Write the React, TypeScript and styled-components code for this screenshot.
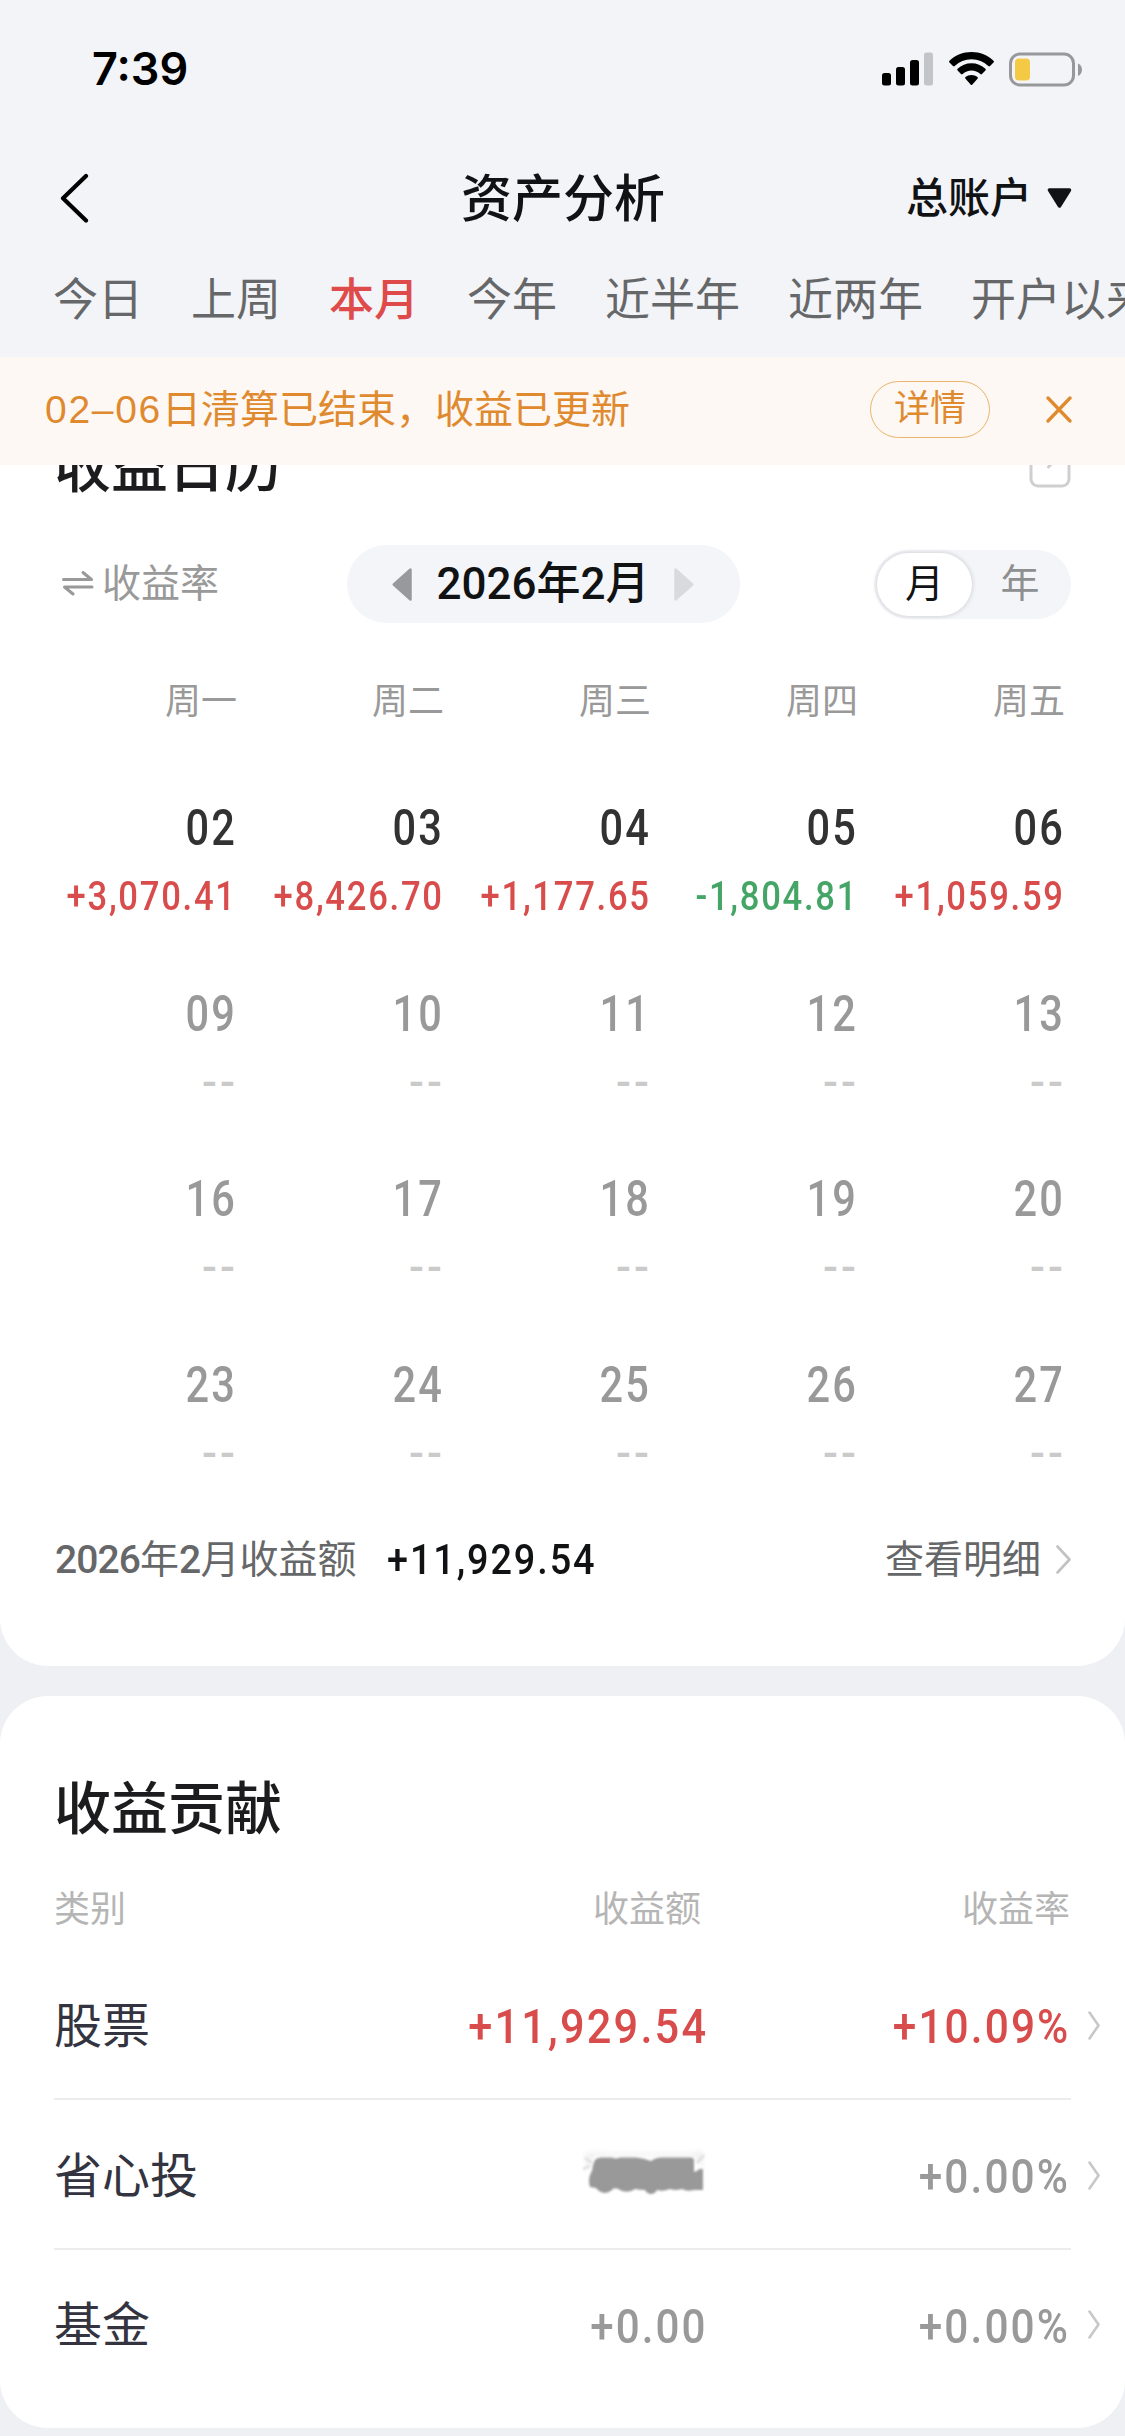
import React from "react";
import styled, { createGlobalStyle } from "styled-components";

const GlobalStyle = createGlobalStyle`
  *, *::before, *::after { box-sizing: border-box; }
  body {
    margin: 0;
    background: #eff0f4;
    font-family: "Liberation Sans", "Noto Sans CJK SC", sans-serif;
    line-height: 1;
    color: #111214;
  }
  svg { flex: none; display: block; }
`;

const Screen = styled.main`
  width: 1125px;
  height: 2436px;
  overflow: hidden;
`;

/* ---------- header ---------- */

const Header = styled.header`
  height: 357px;
  background: #f3f4f8;
`;

const StatusBar = styled.div`
  display: flex;
  align-items: center;
  justify-content: space-between;
  height: 138px;
  padding: 0 43px 0 92px;
`;

const Clock = styled.span`
  font: 600 45px/60px Inter, sans-serif;
  color: #000;
`;

const StatusIcons = styled.div`
  display: flex;
  align-items: center;
  gap: 15.5px;
`;

const NavBar = styled.div`
  display: grid;
  grid-template-columns: 400px 1fr 400px;
  align-items: center;
  height: 119px;
  padding: 0 53px 0 60px;
`;

const NavTitle = styled.h1`
  margin: 0 0 0 1px;
  padding-top: 4px;
  font-size: 51px;
  font-weight: 500;
  white-space: nowrap;
`;

const AccountPicker = styled.div`
  display: flex;
  align-items: center;
  justify-content: flex-end;
  gap: 15px;
  font-size: 42px;
  font-weight: 500;
`;

const AccountName = styled.span`
  padding-top: 3px;
`;

const Tabs = styled.nav`
  display: flex;
  align-items: center;
  gap: 48px;
  height: 87px;
  padding: 0 0 0 53px;
  overflow: hidden;
`;

const Tab = styled.span<{ $active?: boolean }>`
  flex: none;
  font-size: 45px;
  line-height: 60px;
  font-weight: ${(p) => (p.$active ? 500 : 400)};
  color: ${(p) => (p.$active ? "#df4a4a" : "#666769")};
`;

/* ---------- notice ---------- */

const Notice = styled.div`
  position: relative;
  z-index: 1;
  display: flex;
  align-items: center;
  height: 108px;
  padding: 0 53px 3px 45px;
  background: #fef8f5;
  color: #e08a30;
`;

const NoticeText = styled.span`
  flex: 1;
  font-size: 39px;
  line-height: 56px;
`;

const NoticeDate = styled.span`
  letter-spacing: 1.7px;
`;

const NoticeButton = styled.span`
  width: 120px;
  height: 57px;
  margin-right: 56px;
  border: 1.5px solid #e9b56c;
  border-radius: 29px;
  font-size: 36px;
  line-height: 54px;
  text-align: center;
`;

/* ---------- cards ---------- */

const Card = styled.section<{ $first?: boolean }>`
  background: #fff;
  border-radius: ${(p) => (p.$first ? "0 0 48px 48px" : "48px")};
  padding: ${(p) => (p.$first ? "0 54px 33px" : "73px 54px 29px")};
  margin-bottom: 30px;
`;

const CardHead = styled.div<{ $tucked?: boolean }>`
  display: flex;
  align-items: center;
  justify-content: space-between;
  height: 80px;
  margin-top: ${(p) => (p.$tucked ? "-38px" : "0")};
  margin-bottom: ${(p) => (p.$tucked ? "1px" : "0")};
  padding-top: ${(p) => (p.$tucked ? "0" : "2px")};
`;

const CardTitle = styled.h2`
  margin: 0;
  font-size: 57px;
  font-weight: 500;
  color: #1c1c1e;
`;

const Controls = styled.div`
  display: grid;
  grid-template-columns: 293px 393px 1fr;
  align-items: center;
  height: 152px;
`;

const MetricSwitch = styled.div`
  display: flex;
  align-items: center;
  gap: 8px;
  padding: 0 0 2px 8px;
  font-size: 39px;
  color: #999;
`;

const MonthPicker = styled.div`
  display: flex;
  align-items: center;
  justify-content: space-between;
  height: 78px;
  padding: 0 46px 0 45px;
  border-radius: 39px;
  background: #f4f5f8;
`;

const MonthLabel = styled.span`
  font-family: Roboto, "Noto Sans CJK SC", sans-serif;
  font-size: 44px;
  font-weight: 500;
  line-height: 60px;
  white-space: nowrap;
`;

const Toggle = styled.div`
  display: flex;
  justify-self: end;
  gap: 2px;
  width: 197px;
  height: 69px;
  padding: 3px 5px 3px 3px;
  border-radius: 35px;
  background: #f4f5f8;
`;

const ToggleItem = styled.span<{ $on?: boolean }>`
  flex: ${(p) => (p.$on ? "0 0 95px" : "1")};
  border-radius: 33px;
  font-size: 39px;
  line-height: 61px;
  text-align: center;
  color: ${(p) => (p.$on ? "#111214" : "#8e8f91")};
  background: ${(p) => (p.$on ? "#fff" : "transparent")};
  box-shadow: ${(p) => (p.$on ? "0 0 4px 1px rgba(0, 0, 0, 0.13)" : "none")};
`;

/* ---------- figures ---------- */

const Figure = styled.span<{ $size: number; $tone?: string; $origin?: string; $squeeze?: number }>`
  display: inline-block;
  font-family: Roboto, sans-serif;
  font-size: ${(p) => p.$size}px;
  font-weight: 500;
  line-height: 60px;
  padding-top: 1px;
  letter-spacing: 0.05em;
  margin-right: -0.04em;
  white-space: nowrap;
  color: ${(p) => p.$tone ?? "inherit"};
  transform: scaleX(${(p) => p.$squeeze ?? 0.87});
  transform-origin: ${(p) => p.$origin ?? "right"} center;
`;

const RED = "#d84c4c";
const GREEN = "#45a566";
const GREY = "#999999";

/* ---------- calendar ---------- */

const Week = styled.div`
  display: grid;
  grid-template-columns: 182px repeat(4, 207px);
`;

const Weekday = styled.span`
  height: 60px;
  margin: 12px -1px 10px 0;
  font-size: 36px;
  line-height: 60px;
  text-align: right;
  color: #999;
`;

const Day = styled.div`
  display: flex;
  flex-direction: column;
  align-items: flex-end;
  gap: 8px;
  height: 185.7px;
  padding: 55px 1px 0 0;
`;

const NoData = styled.span`
  font: 500 44px/60px Roboto, sans-serif;
  letter-spacing: 3px;
  margin-right: -3px;
  color: #cacaca;
`;

const Summary = styled.div`
  display: flex;
  align-items: center;
  height: 148px;
  font-size: 39px;
  color: #666769;
`;

const SummaryLabel = styled.span`
  font-family: Roboto, "Noto Sans CJK SC", sans-serif;
  line-height: 60px;
  padding: 2px 0 0 1px;
  margin-right: 31px;
`;

const LabelNumber = styled.span`
  font-weight: 500;
  letter-spacing: -0.9px;
`;

const DetailLink = styled.span`
  display: flex;
  align-items: center;
  gap: 15px;
  margin-left: auto;
  padding-top: 2px;
`;

/* ---------- contribution table ---------- */

const TableHead = styled.div`
  display: grid;
  grid-template-columns: 280px 367px 369px;
  height: 60px;
  margin: 31px 0 10px;
  font-size: 36px;
  line-height: 60px;
  color: #b5b5b5;
  & > :not(:first-child) { text-align: right; }
`;

const Row = styled.div`
  display: grid;
  grid-template-columns: 280px 372px 362px 1fr;
  align-items: center;
  height: 150px;
  padding-top: 4px;
  margin-right: -29px;
  background: linear-gradient(#ededef, #ededef) left bottom / 1017px 2px no-repeat;
  &:last-child { height: 149px; background: none; }
`;

const Name = styled.span`
  font-size: 48px;
  line-height: 60px;
  color: #33343f;
`;

const Cell = styled.span`
  display: flex;
  justify-content: flex-end;
`;

const ChevronCell = styled.span`
  display: flex;
  justify-content: flex-end;
  padding-bottom: 3px;
`;

/* ---------- drawings ---------- */

const Signal = () => (
  <svg width="51" height="34" viewBox="0 0 51 34">
    <rect x="0" y="21" width="9" height="12.5" rx="2.5" />
    <rect x="14" y="15" width="9" height="18.5" rx="2.5" />
    <rect x="28" y="8" width="9" height="25.5" rx="2.5" />
    <rect x="42" y="0.5" width="9" height="33" rx="2.5" fill="#c3c4c8" />
  </svg>
);

const Wifi = () => (
  <svg width="45" height="34" viewBox="0 0 45 34">
    <path d="M22.5 0C31 0 38.800 3.200 44.500 8.800a1.200 1.200 0 0 1 0 1.700L41 14a1.200 1.200 0 0 1-1.700 0A24 24 0 0 0 22.500 7.200 24 24 0 0 0 5.700 14 1.200 1.200 0 0 1 4 14L.500 10.500a1.200 1.200 0 0 1 0-1.700C6.200 3.200 14 0 22.500 0Z" />
    <path d="M22.500 11.300c5.300 0 10.200 2 13.900 5.500a1.200 1.200 0 0 1 0 1.700L33 22a1.200 1.200 0 0 1-1.700 0 12.800 12.800 0 0 0-17.600 0 1.200 1.200 0 0 1-1.700 0l-3.400-3.500a1.200 1.200 0 0 1 0-1.700c3.700-3.500 8.600-5.500 13.900-5.500Z" />
    <path d="M22.500 22.900c2.300 0 4.400.8 6 2.200a1.200 1.200 0 0 1 0 1.700l-5.100 5.700a1.200 1.200 0 0 1-1.800 0l-5.100-5.700a1.200 1.200 0 0 1 0-1.700c1.600-1.400 3.700-2.200 6-2.200Z" />
  </svg>
);

const Battery = () => (
  <svg width="73" height="35" viewBox="0 0 73 35">
    <rect x="1.5" y="2" width="63" height="31" rx="9.500" fill="none" stroke="#97989b" strokeWidth="3" />
    <rect x="6" y="6.500" width="15" height="22" rx="4" fill="#f4c944" />
    <path d="M69 11.500c2.600 1 4 3.400 4 6.200s-1.400 5.200-4 6.200Z" fill="#97989b" />
  </svg>
);

const Back = () => (
  <svg width="30" height="50" viewBox="0 0 30 50" fill="none" stroke="#000" strokeWidth="4.200" strokeLinecap="round" strokeLinejoin="round">
    <path d="M26 3 3 25.300 26 47.500" />
  </svg>
);

const CaretDown = () => (
  <svg width="25" height="20" viewBox="0 0 25 20">
    <path d="M2.500 2h20L12.500 18Z" fill="#111214" stroke="#111214" strokeWidth="3.500" strokeLinejoin="round" />
  </svg>
);

const Close = () => (
  <svg width="26" height="27" viewBox="0 0 26 27" fill="none" stroke="#e08a30" strokeWidth="3.300" strokeLinecap="round">
    <path d="M2 2 24 25M24 2 2 25" />
  </svg>
);

const Share = () => (
  <svg width="42" height="42" viewBox="0 0 42 42" fill="none" stroke="#cfcfd1" strokeWidth="3">
    <path d="M22 2H9a7 7 0 0 0-7 7v24a7 7 0 0 0 7 7h24a7 7 0 0 0 7-7V12" />
    <path d="M19.500 21 27 13" strokeLinecap="round" />
  </svg>
);

const Swap = () => (
  <svg width="32" height="26" viewBox="0 0 32 26" fill="none" stroke="#999" strokeWidth="3" strokeLinecap="round" strokeLinejoin="round">
    <path d="M1.500 9.500h28L21 2.500" />
    <path d="M30 17H2.500L11 24" />
  </svg>
);

const Caret = ({ side, tone }: { side: "left" | "right"; tone: string }) => (
  <svg width="20" height="33" viewBox="0 0 20 33">
    <path
      d={side === "left" ? "M18.500 1.500v30L1.800 16.500Z" : "M1.500 1.500v30L18.200 16.500Z"}
      fill={tone}
      stroke={tone}
      strokeWidth="2.500"
      strokeLinejoin="round"
    />
  </svg>
);

const Chevron = ({ width, tone }: { width: number; tone: string }) => (
  <svg width={width} height="29" viewBox={`0 0 ${width} 29`} fill="none" stroke={tone} strokeWidth="2.600" strokeLinecap="round" strokeLinejoin="round">
    <path d={`M1.500 1.500 ${width - 1.500} 14.500 1.500 27.500`} />
  </svg>
);

const SmudgeSvg = styled.svg`
  margin: -6px 0 4px;
`;

const Smudge = () => (
  <SmudgeSvg width="124" height="48" viewBox="0 0 124 48">
    <defs>
      <filter id="soft" x="-10%" y="-20%" width="120%" height="140%">
        <feGaussianBlur stdDeviation="0.8" />
      </filter>
      <filter id="faint" x="-10%" y="-20%" width="120%" height="140%">
        <feGaussianBlur stdDeviation="2.500" />
      </filter>
    </defs>
    <path d="M3 5 14 4 24 5H106L121 3V20L112 8H12L5 24Z" fill="#f0f0f0" filter="url(#faint)" />
    <path d="M1 21 8 18M3 10l7 5M115 15l7-8" stroke="#dadada" strokeWidth="2" filter="url(#soft)" />
    <path
      d="M13 12Q15 9.500 19 9.500H30Q34 11.500 38 9.500H54Q62 10 69 13Q73 9.500 80 9.500H109Q112 9.500 112 13V24Q116 23 117 21H121V42L112 42Q105 44 100 41Q93 43 88 41Q81 44 75 42Q73 46 69 46Q65 46 63 42Q57 42 53 41Q48 45 40 43Q34 39 31 41Q27 45 22 45Q17 44 14 40L8 39Q6 33 8 27Q11 22 11 17Z"
      fill="#999"
      filter="url(#soft)"
    />
  </SmudgeSvg>
);

/* ---------- data ---------- */

const tabs = ["今日", "上周", "本月", "今年", "近半年", "近两年", "开户以来"];
const weekdays = ["周一", "周二", "周三", "周四", "周五"];

type DayInfo = { date: string; amount?: string };

const weeks: DayInfo[][] = [
  [
    { date: "02", amount: "+3,070.41" },
    { date: "03", amount: "+8,426.70" },
    { date: "04", amount: "+1,177.65" },
    { date: "05", amount: "-1,804.81" },
    { date: "06", amount: "+1,059.59" },
  ],
  ["09", "10", "11", "12", "13"].map((date) => ({ date })),
  ["16", "17", "18", "19", "20"].map((date) => ({ date })),
  ["23", "24", "25", "26", "27"].map((date) => ({ date })),
];

const contributions = [
  { name: "股票", amount: "+11,929.54", rate: "+10.09%", tone: RED },
  { name: "省心投", amount: null, rate: "+0.00%", tone: GREY },
  { name: "基金", amount: "+0.00", rate: "+0.00%", tone: GREY },
];

export default function App() {
  return (
    <Screen>
      <GlobalStyle />
      <Header>
        <StatusBar>
          <Clock>7:39</Clock>
          <StatusIcons>
            <Signal />
            <Wifi />
            <Battery />
          </StatusIcons>
        </StatusBar>
        <NavBar>
          <Back />
          <NavTitle>资产分析</NavTitle>
          <AccountPicker>
            <AccountName>总账户</AccountName>
            <CaretDown />
          </AccountPicker>
        </NavBar>
        <Tabs>
          {tabs.map((t) => (
            <Tab key={t} $active={t === "本月"}>
              {t}
            </Tab>
          ))}
        </Tabs>
      </Header>

      <Notice>
        <NoticeText>
          <NoticeDate>02–06</NoticeDate>日清算已结束，收益已更新
        </NoticeText>
        <NoticeButton>详情</NoticeButton>
        <Close />
      </Notice>

      <Card $first>
        <CardHead $tucked>
          <CardTitle>收益日历</CardTitle>
          <Share />
        </CardHead>
        <Controls>
          <MetricSwitch>
            <Swap />
            收益率
          </MetricSwitch>
          <MonthPicker>
            <Caret side="left" tone="#98999b" />
            <MonthLabel>2026年2月</MonthLabel>
            <Caret side="right" tone="#d9dadd" />
          </MonthPicker>
          <Toggle>
            <ToggleItem $on>月</ToggleItem>
            <ToggleItem>年</ToggleItem>
          </Toggle>
        </Controls>
        <Week>
          {weekdays.map((d) => (
            <Weekday key={d}>{d}</Weekday>
          ))}
        </Week>
        {weeks.map((week) => (
          <Week key={week[0].date}>
            {week.map(({ date, amount }) => (
              <Day key={date}>
                <Figure $size={50} $squeeze={0.83} $tone={amount ? "#323233" : GREY}>
                  {date}
                </Figure>
                {amount ? (
                  <Figure $size={40} $squeeze={0.865} $tone={amount.startsWith("-") ? GREEN : RED}>
                    {amount}
                  </Figure>
                ) : (
                  <NoData>--</NoData>
                )}
              </Day>
            ))}
          </Week>
        ))}
        <Summary>
          <SummaryLabel>
            <LabelNumber>2026</LabelNumber>年<LabelNumber>2</LabelNumber>月收益额
          </SummaryLabel>
          <Figure $size={43} $squeeze={0.88} $tone="#111214" $origin="left">
            +11,929.54
          </Figure>
          <DetailLink>
            查看明细
            <Chevron width={15} tone="#c2c2c4" />
          </DetailLink>
        </Summary>
      </Card>

      <Card>
        <CardHead>
          <CardTitle>收益贡献</CardTitle>
        </CardHead>
        <TableHead>
          <span>类别</span>
          <span>收益额</span>
          <span>收益率</span>
        </TableHead>
        {contributions.map((c) => (
          <Row key={c.name}>
            <Name>{c.name}</Name>
            <Cell>
              {c.amount ? (
                <Figure $size={49} $squeeze={c.amount.length > 6 ? 0.885 : 0.86} $tone={c.tone}>
                  {c.amount}
                </Figure>
              ) : (
                <Smudge />
              )}
            </Cell>
            <Cell>
              <Figure $size={49} $squeeze={0.865} $tone={c.tone}>
                {c.rate}
              </Figure>
            </Cell>
            <ChevronCell>
              <Chevron width={12} tone="#c8c8ca" />
            </ChevronCell>
          </Row>
        ))}
      </Card>
    </Screen>
  );
}
